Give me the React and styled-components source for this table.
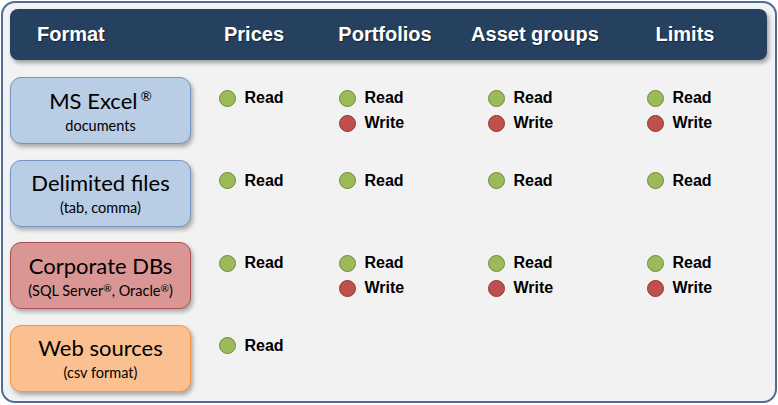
import React from 'react';
import styled, { createGlobalStyle } from 'styled-components';

const Global = createGlobalStyle`
  html, body { margin: 0; padding: 0; background: #ffffff; }
  body { padding: 1px; }
`;

const COLS = '181px 126px 136px 164px 136px';
const PADS = [28, 22, 35, 30];

const Frame = styled.div`
  box-sizing: border-box;
  width: 776px;
  height: 402px;
  border: 2px solid #4d6d99;
  border-radius: 14px;
  background: #f2f2f2;
  padding: 6px 8px 0 7px;
  display: flex;
  flex-direction: column;
`;

const Header = styled.div`
  display: grid;
  grid-template-columns: ${COLS};
  align-items: center;
  height: 51px;
  background: #26405f;
  border-radius: 8px;
  box-shadow: 2px 3px 4px rgba(0, 0, 0, 0.35);
  font-family: "Liberation Sans", Arial, sans-serif;
  font-weight: bold;
  font-size: 20px;
  color: #ffffff;
`;

const HeadCell = styled.div`
  text-align: ${(p) => (p.$left ? 'left' : 'center')};
  padding-left: ${(p) => (p.$left ? '27px' : '0')};
  text-shadow: 1px 1px 1px rgba(0, 0, 0, 0.45);
  white-space: nowrap;
`;

const Body = styled.div`
  display: flex;
  flex-direction: column;
  gap: 15.5px;
  margin-top: 17px;
`;

const Row = styled.div`
  display: grid;
  grid-template-columns: ${COLS};
  align-items: start;
`;

const tones = {
  blue: { bg: '#b9cde5', border: '#7396c6' },
  red: { bg: '#d99694', border: '#b0504d' },
  orange: { bg: '#fac090', border: '#f79646' },
};

const FormatBox = styled.div`
  box-sizing: border-box;
  height: 67px;
  border: 1px solid ${(p) => tones[p.$tone].border};
  background: ${(p) => tones[p.$tone].bg};
  border-radius: 11px;
  box-shadow: 2px 3px 4px rgba(0, 0, 0, 0.3);
  display: flex;
  flex-direction: column;
  align-items: center;
  padding-top: 9.5px;
  font-family: Lato, "Open Sans", sans-serif;
  color: #000000;
`;

const Title = styled.div`
  font-size: 22px;
  line-height: 26px;
  white-space: nowrap;
`;

const Sub = styled.div`
  font-size: 14.5px;
  line-height: 22px;
  margin-top: 1px;
  white-space: nowrap;
`;

const Reg = styled.span`
  font-size: ${(p) => (p.$big ? '0.62em' : '0.7em')};
  vertical-align: ${(p) => (p.$big ? '0.55em' : '0.35em')};
  margin-left: ${(p) => (p.$big ? '3px' : '0')};
  line-height: 0;
`;

const Cell = styled.div`
  padding-top: 8.5px;
  padding-left: ${(p) => p.$pad}px;
  display: flex;
  flex-direction: column;
`;

const Item = styled.div`
  display: flex;
  align-items: center;
  height: 25px;
  gap: 8.5px;
  font-family: "Liberation Sans", Arial, sans-serif;
  font-weight: bold;
  font-size: 16px;
  color: #000000;
  white-space: nowrap;
`;

const Dot = styled.span`
  box-sizing: border-box;
  width: 17px;
  height: 17px;
  border-radius: 50%;
  flex: none;
  background: ${(p) => (p.$write ? '#c0504d' : '#9bbb59')};
  border: 1.5px solid ${(p) => (p.$write ? '#8c3836' : '#71893f')};
`;

const headers = ['Prices', 'Portfolios', 'Asset groups', 'Limits'];

const rows = [
  {
    tone: 'blue',
    title: (<>MS Excel<Reg $big>®</Reg></>),
    sub: 'documents',
    cells: [['R'], ['R', 'W'], ['R', 'W'], ['R', 'W']],
  },
  {
    tone: 'blue',
    title: 'Delimited files',
    sub: '(tab, comma)',
    cells: [['R'], ['R'], ['R'], ['R']],
  },
  {
    tone: 'red',
    title: 'Corporate DBs',
    sub: (<>(SQL Server<Reg>®</Reg>, Oracle<Reg>®</Reg>)</>),
    cells: [['R'], ['R', 'W'], ['R', 'W'], ['R', 'W']],
  },
  {
    tone: 'orange',
    title: 'Web sources',
    sub: '(csv format)',
    cells: [['R'], [], [], []],
  },
];

export default function App() {
  return (
    <>
      <Global />
      <Frame>
        <Header>
          <HeadCell $left>Format</HeadCell>
          {headers.map((h) => (
            <HeadCell key={h}>{h}</HeadCell>
          ))}
        </Header>
        <Body>
          {rows.map((r, i) => (
            <Row key={i}>
              <FormatBox $tone={r.tone}>
                <Title>{r.title}</Title>
                <Sub>{r.sub}</Sub>
              </FormatBox>
              {r.cells.map((c, j) => (
                <Cell key={j} $pad={PADS[j]}>
                  {c.map((k) => (
                    <Item key={k}>
                      <Dot $write={k === 'W'} />
                      {k === 'W' ? 'Write' : 'Read'}
                    </Item>
                  ))}
                </Cell>
              ))}
            </Row>
          ))}
        </Body>
      </Frame>
    </>
  );
}
